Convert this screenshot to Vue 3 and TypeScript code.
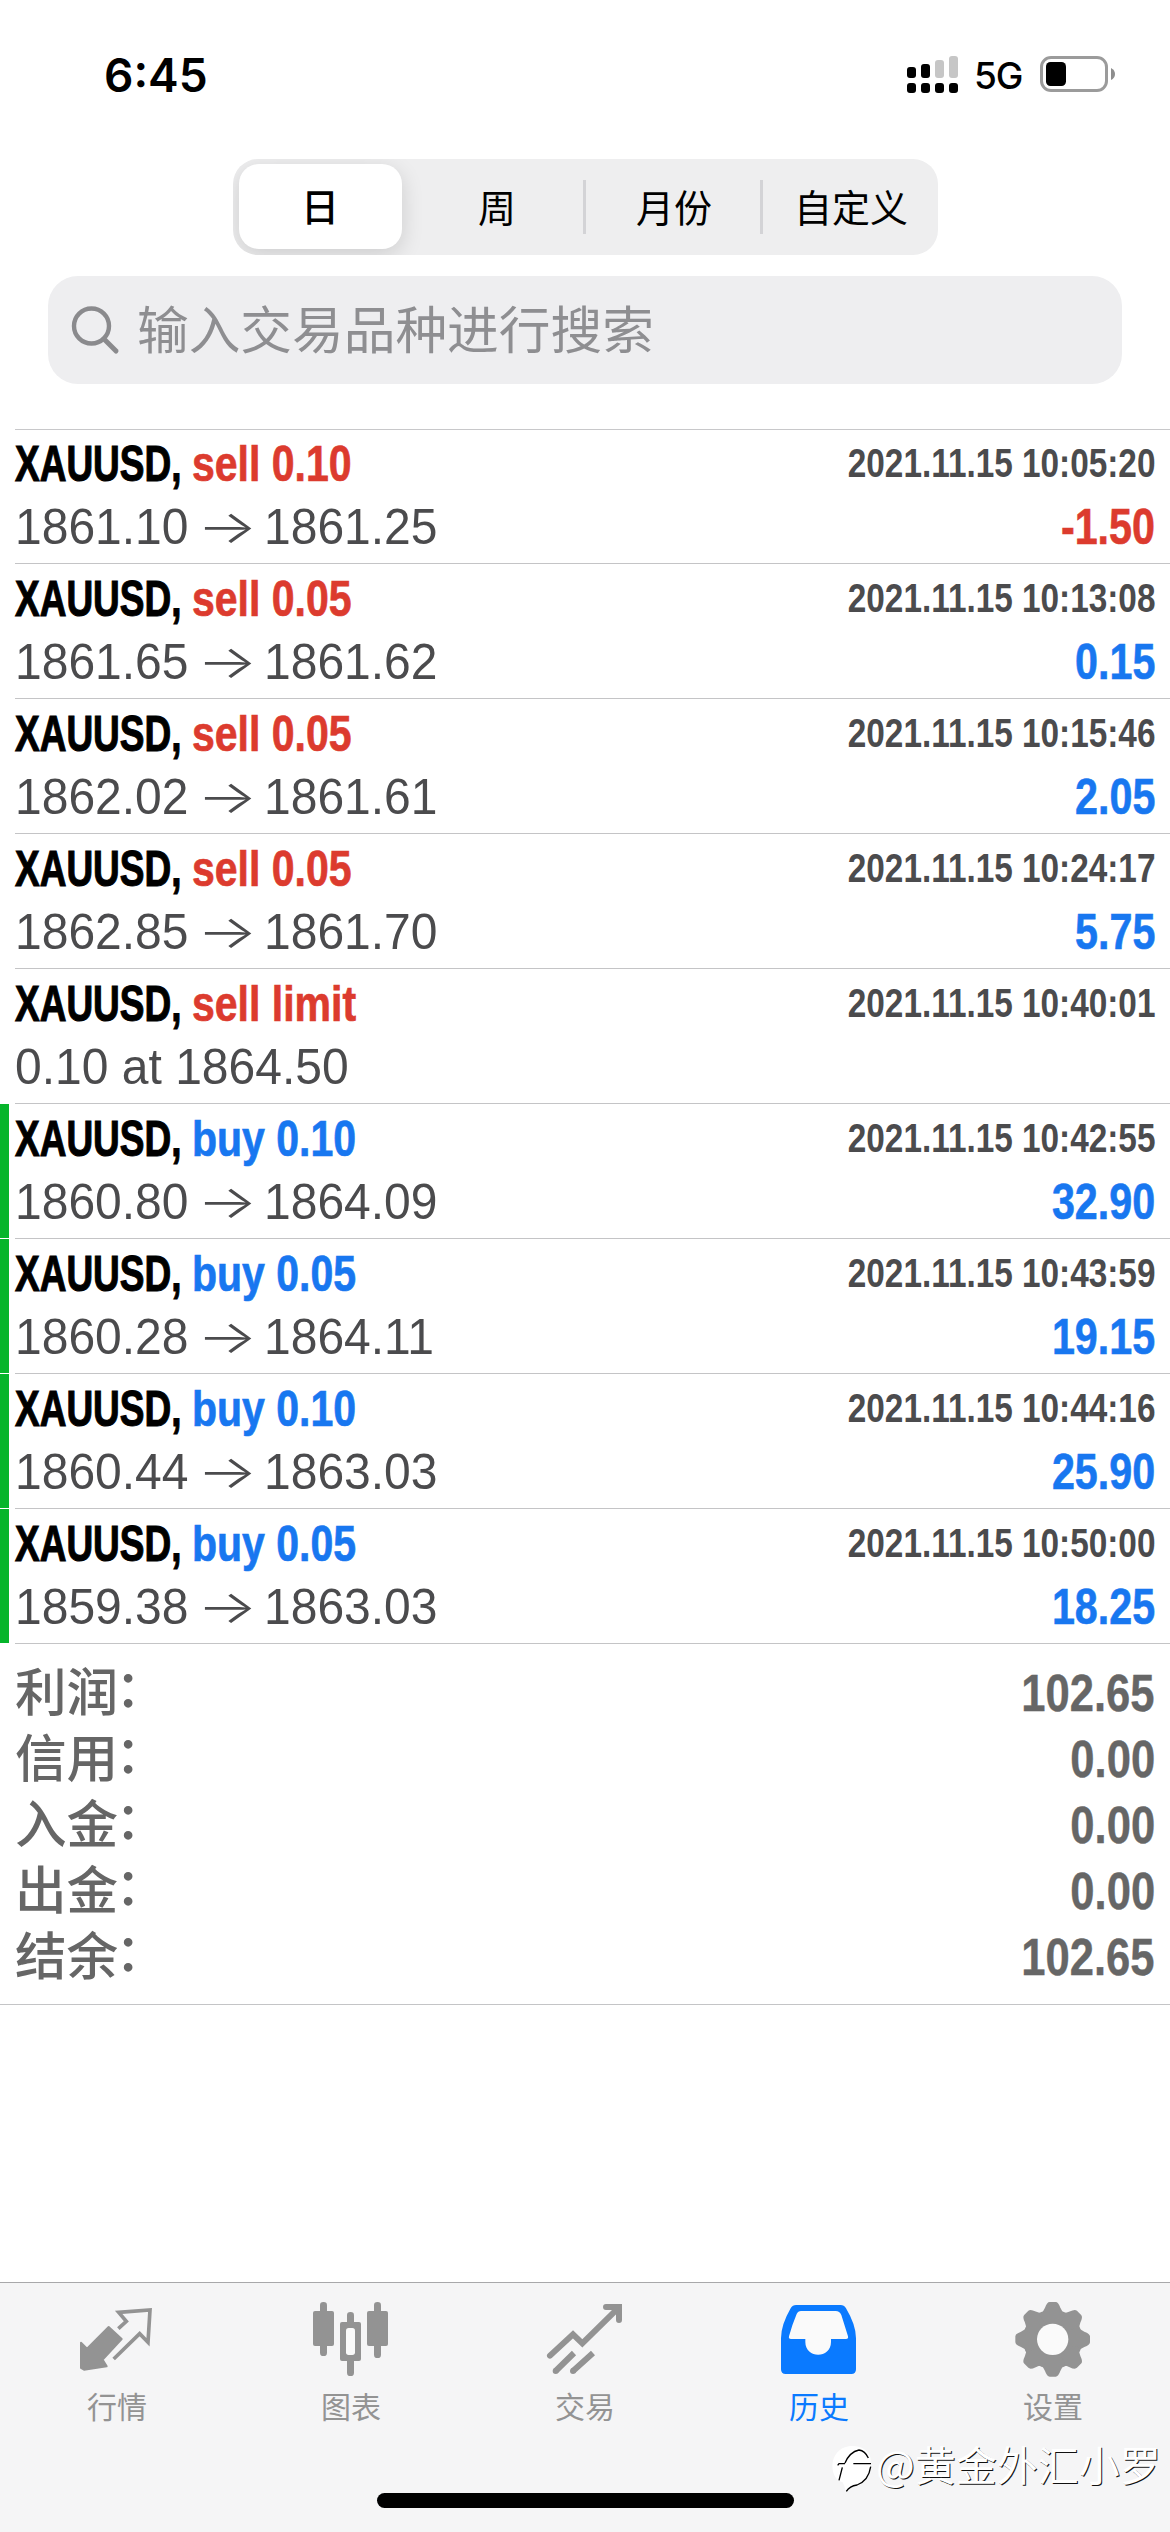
<script setup lang="ts">
type Side = 'sell' | 'buy'

interface Deal {
  side: Side
  volume: string
  from?: string
  to?: string
  note?: string
  time: string
  profit?: string
  closed?: boolean
}

const periods: string[] = ['日', '周', '月份', '自定义']

const deals: Deal[] = [
  { side: 'sell', volume: '0.10', from: '1861.10', to: '1861.25', time: '2021.11.15 10:05:20', profit: '-1.50' },
  { side: 'sell', volume: '0.05', from: '1861.65', to: '1861.62', time: '2021.11.15 10:13:08', profit: '0.15' },
  { side: 'sell', volume: '0.05', from: '1862.02', to: '1861.61', time: '2021.11.15 10:15:46', profit: '2.05' },
  { side: 'sell', volume: '0.05', from: '1862.85', to: '1861.70', time: '2021.11.15 10:24:17', profit: '5.75' },
  { side: 'sell', volume: 'limit', note: '0.10 at 1864.50', time: '2021.11.15 10:40:01' },
  { side: 'buy', volume: '0.10', from: '1860.80', to: '1864.09', time: '2021.11.15 10:42:55', profit: '32.90', closed: true },
  { side: 'buy', volume: '0.05', from: '1860.28', to: '1864.11', time: '2021.11.15 10:43:59', profit: '19.15', closed: true },
  { side: 'buy', volume: '0.10', from: '1860.44', to: '1863.03', time: '2021.11.15 10:44:16', profit: '25.90', closed: true },
  { side: 'buy', volume: '0.05', from: '1859.38', to: '1863.03', time: '2021.11.15 10:50:00', profit: '18.25', closed: true },
]

const totals: { label: string; value: string }[] = [
  { label: '利润', value: '102.65' },
  { label: '信用', value: '0.00' },
  { label: '入金', value: '0.00' },
  { label: '出金', value: '0.00' },
  { label: '结余', value: '102.65' },
]

const isLoss = (profit: string): boolean => profit.startsWith('-')
</script>

<template>
  <div class="screen">
    <header class="status">
      <span class="clock">6:45</span>
      <div class="indicators">
        <svg class="signal" width="52" height="38" viewBox="0 0 52 38">
          <rect x="0" y="11" width="9" height="11" rx="3" />
          <rect x="14" y="8" width="9" height="14" rx="3" />
          <rect x="28" y="4" width="9" height="18" rx="3" fill="#c6c6c6" />
          <rect x="42" y="0" width="9" height="22" rx="3" fill="#c6c6c6" />
          <rect v-for="i in 4" :key="i" :x="(i - 1) * 14" y="27" width="9" height="10" rx="3" />
        </svg>
        <span class="network">5G</span>
        <svg class="battery" width="76" height="36" viewBox="0 0 76 36">
          <rect x="1.5" y="1.5" width="65" height="33" rx="9.5" fill="none" stroke="#9b9b9b" stroke-width="3" />
          <rect x="6" y="6" width="20" height="24" rx="4.5" />
          <path d="M71 12q4 2 4 6t-4 6z" fill="#8e8e8e" />
        </svg>
      </div>
    </header>

    <nav class="periods">
      <button v-for="(p, i) in periods" :key="p" class="period" :class="{ active: i === 0 }">{{ p }}</button>
    </nav>

    <div class="search">
      <svg width="50" height="50" viewBox="0 0 50 50" fill="none" stroke="#8a8a8d" stroke-linecap="round">
        <circle cx="21.5" cy="21" r="17.5" stroke-width="4.4" />
        <path d="M34 34L46 46" stroke-width="5" />
      </svg>
      <span>输入交易品种进行搜索</span>
    </div>

    <main class="deals">
      <article v-for="d in deals" :key="d.time" class="deal" :class="{ closed: d.closed }">
        <div class="line">
          <span class="symbol"><b>XAUUSD,</b></span>
          <b class="action" :class="d.side">{{ d.side }} {{ d.volume }}</b>
          <b class="time">{{ d.time }}</b>
        </div>
        <div class="line">
          <template v-if="d.from">
            <span class="from"><i>{{ d.from }}</i></span>
            <span class="arrow"><i>→</i></span>
            <i class="to">{{ d.to }}</i>
          </template>
          <i v-else class="note">{{ d.note }}</i>
          <b v-if="d.profit" class="profit" :class="isLoss(d.profit) ? 'sell' : 'buy'">{{ d.profit }}</b>
        </div>
      </article>
    </main>

    <section class="totals">
      <div v-for="t in totals" :key="t.label" class="total">
        <span>{{ t.label }}<em>：</em></span>
        <b>{{ t.value }}</b>
      </div>
    </section>

    <footer class="tabbar">
      <div class="tabs">
        <div class="tab">
          <svg viewBox="231 120 240 240">
            <path fill="currentColor" stroke="currentColor" stroke-width="6" stroke-linejoin="round" d="M326 201L365 237L308 299L320 319L252 329L243 324V248L261 266z" />
            <path fill="none" stroke="currentColor" stroke-width="11" d="M355 206L379 184L356 157L450 150L444 247L419 221L341 297" />
          </svg>
          <span>行情</span>
        </div>
        <div class="tab">
          <svg viewBox="933 120 240 240">
            <g fill="currentColor">
              <rect x="960" y="126" width="21" height="162" rx="10" />
              <rect x="939" y="153" width="63" height="105" rx="6" />
              <rect x="1041" y="156" width="21" height="60" rx="10" />
              <rect x="1041" y="270" width="21" height="78" rx="10" />
              <rect x="1020" y="186" width="63" height="117" rx="6" />
              <rect x="1122" y="126" width="21" height="168" rx="10" />
              <rect x="1101" y="153" width="63" height="105" rx="6" />
            </g>
            <rect x="1038" y="204" width="27" height="81" rx="8" fill="#fafafa" />
          </svg>
          <span>图表</span>
        </div>
        <div class="tab">
          <svg viewBox="435 120 240 240" fill="none" stroke="currentColor" stroke-width="18">
            <path stroke-linecap="round" d="M450 287L519 223L547 250L656 143" />
            <path stroke-linecap="round" d="M618 141H657V180" />
            <path d="M467 333L522 279M519 333L579 279" />
            <g fill="currentColor" stroke="none"><circle cx="467" cy="333" r="9" /><circle cx="519" cy="333" r="9" /></g>
          </svg>
          <span>交易</span>
        </div>
        <div class="tab current">
          <svg viewBox="87 120 240 240">
            <path fill="currentColor" d="M138 135H272Q282 135 288 145Q318 195 318 235V328Q318 342 304 342H107Q93 342 93 328V235Q93 195 122 145Q128 135 138 135z" />
            <path fill="#fafafa" d="M153 153H257Q269 153 274 165L294 229Q296 237 288 237H243V246C243 297 166 297 166 246V237H123Q115 237 117 229Q126 195 140 162Q144 153 153 153z" />
          </svg>
          <span>历史</span>
        </div>
        <div class="tab">
          <svg viewBox="789 120 240 240">
            <g fill="currentColor">
              <circle cx="908" cy="238" r="89" />
              <path
                v-for="n in 8"
                :key="n"
                :transform="`rotate(${n * 45} 908 238)`"
                d="M868 164Q880 157 885 143Q891 126 899 126H917Q925 126 931 143Q936 157 948 164L930 190H886z"
              />
            </g>
            <circle cx="908" cy="238" r="47" fill="#fafafa" />
          </svg>
          <span>设置</span>
        </div>
      </div>
      <div class="home"></div>
    </footer>

    <div class="watermark">
      <svg width="42" height="52" viewBox="18 20 126 156">
        <path fill="#fff" d="M60 36C88 26 126 34 136 66C142 110 128 142 96 150Q76 154 62 168Q58 148 52 140C14 132 8 54 60 36z" />
        <path fill="none" stroke="#000" stroke-width="4" d="M38 90L42 85H60M52 96L42 135M60 83Q74 50 102 44Q120 46 130 68M85 85H138M137 94Q131 136 96 149Q74 152 64 168" />
      </svg>
      <span>@黄金外汇小罗</span>
    </div>
  </div>
</template>

<style>
body {
  background: #fff;
}
</style>

<style scoped>
.screen {
  position: relative;
  width: 1170px;
  height: 2532px;
  display: flex;
  flex-direction: column;
  overflow: hidden;
  background: #fff;
  color: #000;
  font-family: "Liberation Sans", "Noto Sans CJK SC", sans-serif;
}

.status {
  height: 159px;
  padding: 56px 54px 0 104px;
  box-sizing: border-box;
  display: flex;
  justify-content: space-between;
  align-items: flex-start;
  font-family: Inter, sans-serif;
}

.clock {
  font-size: 46px;
  font-weight: 600;
  line-height: 38px;
}

.indicators {
  display: flex;
  align-items: flex-start;
}

.network {
  width: 48px;
  margin: 0 18px 0 15px;
  font-size: 37px;
  font-weight: 500;
  line-height: 40px;
  letter-spacing: -1px;
  white-space: nowrap;
}

.periods {
  align-self: center;
  width: 705px;
  height: 96px;
  flex: none;
  display: flex;
  border-radius: 25px;
  background: #eeeeef;
  overflow: hidden;
}

.period {
  flex: 0 0 177px;
  box-sizing: border-box;
  display: flex;
  align-items: center;
  justify-content: center;
  border: 0;
  padding: 0 0 3px;
  margin: 0;
  background: linear-gradient(#d3d3d6, #d3d3d6) right 21px / 3px 54px no-repeat;
  font: 400 38px/54px "Noto Sans CJK SC", sans-serif;
  color: #000;
}

.period:last-child {
  background: none;
}

.period.active {
  flex-basis: 163px;
  margin: 5px 7px 6px 6px;
  border-radius: 20px;
  background: #fff;
  box-shadow: 0 6px 22px rgba(0, 0, 0, 0.14);
  font-weight: 500;
}

.search {
  height: 108px;
  flex: none;
  margin: 21px 48px 0;
  padding-left: 22px;
  display: flex;
  align-items: center;
  border-radius: 30px;
  background: #eeeef0;
  color: #8e8e91;
  font: 400 51.7px/102px "Noto Sans CJK SC", sans-serif;
}

.search svg {
  margin-right: 17px;
}

.search span {
  height: 108px;
}

.deals {
  margin-top: 45px;
  flex: none;
}

.deals::before {
  content: "";
  display: block;
  height: 1px;
  margin-left: 15px;
  background: #c8c8ca;
}

.deal {
  height: 135px;
  box-sizing: border-box;
  padding: 0 15px 7px 15px;
  display: flex;
  flex-direction: column;
  justify-content: flex-end;
  gap: 3px;
  background:
    linear-gradient(#c4c4c6, #c4c4c6) 15px 100% / 1155px 1px no-repeat;
}

.deal:first-child {
  height: 134px;
}

.deal.closed {
  background:
    linear-gradient(#c4c4c6, #c4c4c6) 15px 100% / 1155px 1px no-repeat,
    linear-gradient(#06b52b, #06b52b) 0 0 / 9px 134px no-repeat;
}

.line {
  display: flex;
  height: 60px;
  font-size: 50px;
  line-height: 60px;
  white-space: nowrap;
  color: #4b4b4d;
}

.line b,
.line i {
  display: inline-block;
  font-style: normal;
  transform-origin: 0 50%;
}

.symbol {
  width: 177px;
  color: #000;
}

.symbol b {
  transform: scaleX(0.74);
  -webkit-text-stroke: 1.1px;
}

.line .action {
  transform: scaleX(0.82);
  -webkit-text-stroke: 0.7px;
}

.line .time,
.line .profit {
  margin-left: auto;
  transform-origin: 100% 50%;
  transform: scaleX(0.813);
}

.line .time {
  font-size: 41px;
  line-height: 58px;
}

.line .profit {
  transform: scaleX(0.825);
  -webkit-text-stroke: 0.6px;
}

.line i {
  transform: scaleX(0.96);
}

.from {
  width: 182px;
}

.arrow {
  width: 67px;
  font: 300 46px/58px Inter, sans-serif;
}

.line .arrow i {
  transform: scaleX(1.38);
}

.line .sell {
  color: #dc3b2e;
}

.line .buy {
  color: #1877f0;
}

.totals {
  height: 361px;
  box-sizing: border-box;
  flex: none;
  padding: 16px 15px 0 15px;
  border-bottom: 1px solid #c4c4c6;
}

.total {
  height: 66px;
  display: flex;
  justify-content: space-between;
  color: #666;
  line-height: 66px;
}

.total span {
  font: 500 51.6px/66px "Liberation Sans", "Noto Sans CJK SC", sans-serif;
}

.total em {
  position: relative;
  left: -3px;
  top: -4px;
  font-style: normal;
}

.total b {
  font-size: 52.5px;
  transform-origin: 100% 50%;
  transform: scaleX(0.83);
  -webkit-text-stroke: 0.4px;
}

.tabbar {
  margin-top: auto;
  height: 250px;
  box-sizing: border-box;
  display: flex;
  flex-direction: column;
  align-items: center;
  border-top: 1px solid #a8a8aa;
  background: #f5f5f6;
}

.tabs {
  width: 100%;
  display: flex;
  padding-top: 17px;
}

.tab {
  flex: 1;
  display: flex;
  flex-direction: column;
  align-items: center;
  color: #939393;
}

.tab svg {
  width: 80px;
  height: 80px;
}

.tab span {
  margin-top: 5px;
  font: 400 30px/40px "Noto Sans CJK SC", sans-serif;
}

.tab.current {
  color: #0a7aff;
}

.home {
  width: 417px;
  height: 15px;
  margin-top: auto;
  margin-bottom: 24px;
  border-radius: 8px;
  background: #000;
}

.watermark {
  position: absolute;
  left: 831px;
  top: 2442px;
  display: flex;
  align-items: flex-start;
  font: 400 41px/48px "Noto Sans CJK SC", sans-serif;
  color: #fff;
  white-space: nowrap;
}

.watermark span {
  margin: -3px 0 0 3px;
  text-shadow: 1px 1px 0 #111;
}
</style>
